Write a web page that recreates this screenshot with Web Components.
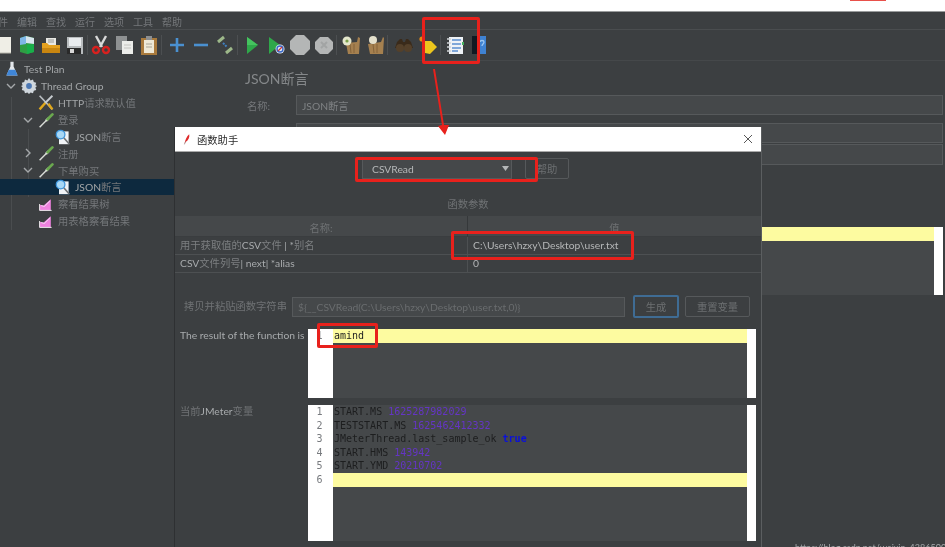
<!DOCTYPE html>
<html lang="zh">
<head>
<meta charset="utf-8">
<title>JMeter</title>
<style>
html, body { margin: 0; height: 100%; background: #3c3f41; overflow: hidden; }
body { font: 10.3px Lato, "Noto Sans CJK SC", sans-serif; color: #8b8e90; }
</style>
</head>
<body>
<jm-app></jm-app>

<script>
const icons = {
  doc: '<path d="M1 2h17v16H1z" fill="#efeee6"/><path d="M1 18h17" stroke="#b9b8ae"/>',
  templates: '<path d="M3 3l6-2 8 2v14l-7 2-7-2z" fill="#2f9e44"/><path d="M3 3l6-2v8l-6 1z" fill="#7fb7e8"/><path d="M9 1l8 2v6l-8-1z" fill="#d8e6ee"/><path d="M10 10l7-1v8l-7 2z" fill="#18b04a"/>',
  open: '<path d="M5 3h10v8H5z" fill="#e8e8e4"/><path d="M7 5h6M7 7h6" stroke="#9a9a96"/><path d="M1 8h5l2 2h11v8H1z" fill="#e5a11f"/><path d="M1 13h18v5H1z" fill="#c98610"/>',
  save: '<path d="M2 2h16v17H2z" fill="#b8bcbe"/><path d="M4 3h12v8H4z" fill="#e9ecee"/><path d="M2 13h14v6H2z" fill="#2a2a2a"/><path d="M5 14h4v4H5z" fill="#d8d8d8"/>',
  cut: '<path d="M5 1l6 11M15 1L9 12" stroke="#d9d9d9" stroke-width="2.4"/><circle cx="5" cy="15" r="3" fill="none" stroke="#d7211f" stroke-width="2.4"/><circle cx="15" cy="15" r="3" fill="none" stroke="#d7211f" stroke-width="2.4"/>',
  copy: '<path d="M1 1h11v14H1z" fill="#8e9192"/><path d="M7 6h11v13H7z" fill="#ecedea"/><path d="M9 10h7M9 13h7" stroke="#c4c4c0"/>',
  paste: '<path d="M2 3h16v17H2z" fill="#a97a3c"/><path d="M5 5h10v13H5z" fill="#efe9d6"/><path d="M7 1h6v4H7z" fill="#8d8f90"/><path d="M7 9h6M7 12h6" stroke="#a9a596"/>',
  plus: '<path d="M10 3v14M3 10h14" stroke="#4a90d0" stroke-width="2.6"/>',
  minus: '<path d="M3 10h14" stroke="#4a90d0" stroke-width="2.6"/>',
  toggle: '<path d="M3 7l6-5M11 18l6-5" stroke="#9db88a" stroke-width="3"/><path d="M8 8l4 4" stroke="#3f7fc0" stroke-width="2" stroke-dasharray="2 1"/>',
  play: '<path d="M5 2l11 8-11 9z" fill="#2fa84a"/><path d="M5 2l11 8H5z" fill="#45c45f"/>',
  playx: '<path d="M3 2l11 8-11 9z" fill="#2fa84a"/><circle cx="14" cy="14" r="4.5" fill="#e9edf5"/><circle cx="14" cy="14" r="3" fill="none" stroke="#3868c8" stroke-width="1.4"/><path d="M12 16l4-4" stroke="#c83838" stroke-width="1.2"/>',
  stop: '<path d="M6 0h8l6 6v8l-6 6H6l-6-6V6z" fill="#b4b6b6"/>',
  halt: '<path d="M6 2h8l5 5v7l-5 5H6l-5-5V7z" fill="#b4b6b6"/><path d="M7 7l6 6M13 7l-6 6" stroke="#a2a4a4" stroke-width="2"/>',
  clear: '<path d="M5 8l11-1 1-5 2 1-1 16H7z" fill="#a5804f"/><path d="M9 9l1 9M13 9v9" stroke="#84633a"/><circle cx="6" cy="6" r="4.5" fill="#e4e6cc"/><circle cx="6" cy="6" r="1.6" fill="#79a04a"/>',
  clearall: '<path d="M3 9l13-2 2-5 1 1-1 16H5z" fill="#a5804f"/><path d="M8 9l1 9M12 9v9" stroke="#84633a"/><circle cx="8" cy="5" r="4" fill="#e4e0cc"/>',
  search: '<path d="M3 7l3-3h2l1 3h2l1-3h2l3 3 2 6H1z" fill="#3a2a1a"/><circle cx="6" cy="13" r="4" fill="#54402a"/><circle cx="14" cy="13" r="4" fill="#54402a"/>',
  reset: '<circle cx="4" cy="4" r="2.6" fill="#e58a12"/><path d="M7 6h6l6 6-7 7-5-1z" fill="#ecc61d"/>',
  func: '<path d="M4 2h14v17H4z" fill="#eef2f6"/><path d="M7 5h9M7 9h9M7 13h9M7 16h6" stroke="#5b8ed0" stroke-width="1.4"/><path d="M2 4h4M2 8h4M2 12h4M2 16h4" stroke="#cfd3d6" stroke-width="1.6"/><path d="M18 7v3" stroke="#45b060" stroke-width="2"/>',
  help: '<path d="M3 1h14v18H3z" fill="#3f82d2"/><path d="M3 1h5v18H3z" fill="#111922"/><path d="M11 7c0-2 4-2 4 0 0 2-2 2-2 4" fill="none" stroke="#9cc6f0" stroke-width="1.3"/>',
  flask: '<path d="M8 1h4v6l5 11H3L8 7z" fill="#e4e8ec"/><path d="M6 11h8l3 7H3z" fill="#3f86d8"/>',
  gear: '<path d="M10 0l2 3 3-1 1 3 3 1-1 3 2 1-2 2 1 3-3 1-1 3-3-1-2 2-2-2-3 1-1-3-3-1 1-3-2-2 2-1-1-3 3-1 1-3 3 1z" fill="#cfd6dc"/><circle cx="10" cy="10" r="3.6" fill="#4c78b4"/>',
  tools: '<path d="M2 1l16 17" stroke="#b9bec2" stroke-width="2"/><path d="M18 1L8 11" stroke="#c7ccd0" stroke-width="2.4"/><path d="M9 10l-7 8" stroke="#e0a81c" stroke-width="3"/><path d="M13 11l5 7" stroke="#e0a81c" stroke-width="3"/>',
  dropper: '<path d="M2 19L11 10" stroke="#d9dcd8" stroke-width="1.8"/><path d="M10 11l3-3" stroke="#e8eae6" stroke-width="3"/><path d="M12 9l6-6" stroke="#6aa84f" stroke-width="3.4" stroke-linecap="round"/>',
  lens: '<path d="M5 3h12v16H5z" fill="#f0f3f6"/><path d="M11 11l7 8" stroke="#6d7174" stroke-width="2"/><circle cx="7" cy="7" r="5.4" fill="#a8d8f6" stroke="#3f96dc" stroke-width="1.6"/>',
  graph: '<path d="M2 18V11l5 1 9-8v14z" fill="#ef82e0"/><path d="M2 18h15M2 10v8" stroke="#eee" stroke-width="1.2"/><path d="M4 12l4 1 7-7" stroke="#f4f0f8" fill="none"/>',
  quill: '<path d="M4 19C5 12 8 5 12 2c1 5-1 10-6 13z" fill="#e02a2a"/><path d="M4 19l2-5" stroke="#888"/>'
};

// small helper, every element is only a template plus a shadow root
function shadow(el, html) {
  el.attachShadow({ mode: 'open' }).innerHTML = html;
}

class JmIcon extends HTMLElement {
  connectedCallback() {
    const size = this.getAttribute('size') || 20;
    shadow(this, `
      <style>:host { display: inline-flex; flex: none; } svg { display: block; }</style>
      <svg width="${size}" height="${size}" viewBox="0 0 20 20">${icons[this.getAttribute('name')]}</svg>`);
  }
}

class JmMenubar extends HTMLElement {
  constructor() {
    super();
    shadow(this, `
      <style>
        :host { display: flex; gap: 9px; height: 18px; align-items: center; padding-top: 1px; box-sizing: border-box;
                margin-left: -2px; border-bottom: 1px solid #4a4d4f; color: #74777a; font-size: 10px; }
      </style>
      <slot></slot>`);
  }
}

class JmToolbar extends HTMLElement {
  constructor() {
    super();
    const slot = n => `<div class="slot"><jm-icon name="${n}"></jm-icon></div>`;
    const sep = w => `<div class="sep" style="width:${w}px"></div>`;
    shadow(this, `
      <style>
        :host { display: flex; height: 30px; align-items: center; margin-left: -9px; border-bottom: 1px solid #45484a; }
        .slot { width: 24px; display: flex; justify-content: center; flex: none; }
        .sep { height: 20px; flex: none; }
        .sep::after { content: ""; display: block; width: 1px; height: 20px; background: #4c4f51; }
      </style>
      ${['doc', 'templates', 'open', 'save'].map(slot).join('')}${sep(2)}
      ${['cut', 'copy', 'paste'].map(slot).join('')}${sep(4)}
      ${['plus', 'minus', 'toggle'].map(slot).join('')}${sep(3)}
      ${['play', 'playx', 'stop', 'halt'].map(slot).join('')}${sep(3)}
      ${['clear', 'clearall'].map(slot).join('')}${sep(5)}
      ${['search', 'reset'].map(slot).join('')}${sep(3)}
      ${['func', 'help'].map(slot).join('')}`);
  }
}

class JmTreeRow extends HTMLElement {
  connectedCallback() {
    const level = +this.getAttribute('level') || 0;
    const chev = this.getAttribute('chev');
    const path = chev === 'open' ? 'M1 3l4 4 4-4' : 'M3 1l4 4-4 4';
    shadow(this, `
      <style>
        :host { display: flex; height: 16.8px; align-items: center; color: #a3a6a8; white-space: nowrap; }
        :host([selected]) { background: #0d293e; }
        .indent { width: ${17 * level + 4}px; flex: none; display: flex; justify-content: flex-end; padding-right: 4px; box-sizing: border-box; }
        .indent svg { width: 12px; height: 10px; }
        jm-icon { margin-right: 4px; }
      </style>
      <div class="indent">${chev ? `<svg viewBox="0 0 10 10"><path d="${path}" fill="none" stroke="#a5a8aa" stroke-width="1.4"/></svg>` : ''}</div>
      <jm-icon name="${this.getAttribute('icon')}" size="16"></jm-icon>
      <slot></slot>`);
  }
}

class JmField extends HTMLElement {
  constructor() {
    super();
    shadow(this, `
      <style>
        :host { display: flex; align-items: center; box-sizing: border-box; height: 20px; border: 1px solid #56595b;
                background: #45484a; padding: 0 5px; color: #7f8284; white-space: nowrap; overflow: hidden; }
      </style>
      <slot></slot>`);
  }
}

class JmButton extends HTMLElement {
  constructor() {
    super();
    shadow(this, `
      <style>
        :host { display: flex; align-items: center; justify-content: center; box-sizing: border-box; flex: none;
                border: 1px solid #56595b; border-radius: 2px; color: #6d7072; }
        :host([primary]) { border: 2px solid #3f6c94; }
      </style>
      <slot></slot>`);
  }
}

class JmEditor extends HTMLElement {
  connectedCallback() {
    const lines = +this.getAttribute('lines') || 1;
    const active = +this.getAttribute('active') || 1;
    const nums = Array.from({ length: lines }, (_, i) => `<div>${i + 1}</div>`).join('');
    shadow(this, `
      <style>
        :host { display: grid; grid-template-columns: 25px 1fr 9px; background: #45484a; flex: none;
                font: 10px/13.6px "DejaVu Sans Mono", monospace; color: #1d1e1f; overflow: hidden; }
        .gutter { background: #fff; text-align: center; color: #777a7e; padding-right: 2px; }
        .body { position: relative; white-space: pre; padding-left: 1px; }
        .hl { position: absolute; left: 0; right: 0; top: ${(active - 1) * 13.6}px; height: 14px; background: #fdfba0; }
        .text { position: relative; }
        .strip { background: #fff; }
      </style>
      <div class="gutter">${nums}</div>
      <div class="body"><div class="hl"></div><div class="text"><slot></slot></div></div>
      <div class="strip"></div>`);
  }
}

class JmTable extends HTMLElement {
  constructor() {
    super();
    shadow(this, `
      <style>
        :host { display: grid; grid-template-columns: 292px 1fr; color: #8b8e90; }
        .head { height: 21px; display: flex; align-items: center; justify-content: center; background: #45484a;
                border-bottom: 1px solid #3a3d3f; box-sizing: border-box; padding-top: 3px; color: #6f7274; }
        .head + .head { border-left: 1px solid #35383a; }
        ::slotted(div) { height: 17px; line-height: 17px; padding-left: 5px; border-bottom: 1px solid #4d5052;
                         white-space: nowrap; color: #7c7f81; }
        ::slotted(div.v) { border-left: 1px solid #4d5052; color: #b5b7b8; }
      </style>
      <div class="head">名称:</div><div class="head">值</div>
      <slot></slot>`);
  }
}

class JmNote extends HTMLElement {
  constructor() {
    super();
    shadow(this, `<style>:host { position: absolute; box-sizing: border-box; border: 3px solid #e8211c; border-radius: 2px; }</style>`);
  }
}

class JmDialog extends HTMLElement {
  constructor() {
    super();
    shadow(this, `
      <style>
        :host { position: absolute; left: 174px; top: 127px; width: 588px; height: 420px; box-sizing: border-box;
                border-left: 1px solid #2e3032; border-right: 1px solid #5b5e60; background: #3c3f41;
                display: flex; flex-direction: column; overflow: hidden; }
        .title { height: 25px; background: #fff; border-bottom: 1px solid #aaa; box-sizing: border-box; flex: none;
                 display: flex; align-items: center; gap: 3px; padding-left: 7px; color: #2b2b2b; }
        .close { margin-left: auto; margin-right: 8px; width: 10px; height: 10px; }
        .body { display: flex; flex-direction: column; flex: 1; }
      </style>
      <div class="title">
        <jm-icon name="quill" size="12"></jm-icon>
        <slot name="title"></slot>
        <svg class="close" viewBox="0 0 10 10"><path d="M1 1l8 8M9 1l-8 8" stroke="#444" stroke-width=".9"/></svg>
      </div>
      <div class="body"><slot></slot></div>`);
  }
}

class JmApp extends HTMLElement {
  constructor() {
    super();
    shadow(this, `
      <style>
        :host { display: block; position: relative; width: 945px; height: 547px; overflow: hidden; background: #3c3f41;
                font: 10.3px Lato, "Noto Sans CJK SC", sans-serif; filter: blur(.35px); }
        .strip { height: 11px; background: #fff; border-bottom: 1px solid #9a9c9d; position: relative; }
        .strip i { position: absolute; left: 850px; top: 0; width: 36px; height: 1px; background: #e8504a; }
        .main { display: grid; grid-template-columns: 174px 1fr; height: 486px; }
        .tree { background:
                  linear-gradient(#4a4d4f, #4a4d4f) 11px 36px / 1px 133px no-repeat,
                  linear-gradient(#4a4d4f, #4a4d4f) 28px 68px / 1px 68px no-repeat; }
        .d { color: #74777a; }
        .panel { padding: 8px 2px 0 71px; display: flex; flex-direction: column; }
        .h { font-size: 14px; line-height: 20px; color: #85888a; }
        .row { display: flex; align-items: center; margin-top: 6px; padding-left: 2px; color: #74777a; }
        .row span { width: 49px; }
        .row jm-field { flex: 1; }
        .f2 { margin: 8px 0 0 51px; height: 20px; }
        .f3 { margin: 1px 0 0 51px; height: 21px; }
        .bg-ed { margin: 62px 0 0 51px; height: 68px; }

        .tb { display: flex; padding-left: 187px; padding-top: 6px; gap: 13px; align-items: stretch; }
        .combo { width: 150px; height: 21px; box-sizing: border-box; border: 1px solid #56595b; background: #45484a;
                 display: flex; align-items: center; padding: 0 1px 0 9px; color: #b5b7b8; }
        .combo svg { margin-left: auto; }
        .cap { text-align: center; margin-top: 18px; height: 14px; line-height: 14px; color: #6f7274; }
        jm-table { margin-top: 5px; }
        .copy { display: flex; margin-top: 22px; align-items: center; padding-left: 9px; }
        .copy .lb { width: 108px; flex: none; color: #6f7274; margin-top: -2px; }
        .copy jm-field { width: 333px; flex: none; color: #6a6d6f; margin-right: 8px; }
        .res { display: flex; margin: 11px 0 0 0; }
        .res .lb { width: 128px; flex: none; padding: 0 0 0 5px; height: 14px; line-height: 13px; color: #a8abad; white-space: nowrap; }
        .vars { margin-top: 7px; }
        .vars .lb { color: #6f7274; }
        .vars .lb b { color: #a8abad; font-weight: 400; }
        .bright { color: #a8abad; }
        .num { color: #6435c4; }
        .kw { color: #0a10dc; font-weight: 700; }
        .wm { position: absolute; left: 795px; top: 542px; font-size: 9px; color: #a5a8aa; white-space: nowrap; }
        .arrow { position: absolute; left: 0; top: 0; pointer-events: none; }
      </style>
      <div class="strip"><i></i></div>
      <jm-menubar>
        <span>件</span><span>编辑</span><span>查找</span><span>运行</span><span>选项</span><span>工具</span><span>帮助</span>
      </jm-menubar>
      <jm-toolbar></jm-toolbar>
      <div class="main">
        <div class="tree">
          <jm-tree-row icon="flask">Test Plan</jm-tree-row>
          <jm-tree-row level="1" chev="open" icon="gear">Thread Group</jm-tree-row>
          <jm-tree-row level="2" icon="tools">HTTP<span class="d">请求默认值</span></jm-tree-row>
          <jm-tree-row level="2" chev="open" icon="dropper"><span class="d">登录</span></jm-tree-row>
          <jm-tree-row level="3" icon="lens">JSON<span class="d">断言</span></jm-tree-row>
          <jm-tree-row level="2" chev="closed" icon="dropper"><span class="d">注册</span></jm-tree-row>
          <jm-tree-row level="2" chev="open" icon="dropper"><span class="d">下单购买</span></jm-tree-row>
          <jm-tree-row level="3" icon="lens" selected>JSON<span class="d">断言</span></jm-tree-row>
          <jm-tree-row level="2" icon="graph"><span class="d">察看结果树</span></jm-tree-row>
          <jm-tree-row level="2" icon="graph"><span class="d">用表格察看结果</span></jm-tree-row>
        </div>
        <div class="panel">
          <div class="h">JSON断言</div>
          <div class="row"><span>名称:</span><jm-field>JSON断言</jm-field></div>
          <jm-field class="f2"></jm-field>
          <jm-field class="f3"></jm-field>
          <jm-editor class="bg-ed" lines="1"></jm-editor>
        </div>
      </div>

      <jm-dialog>
        <span slot="title">函数助手</span>
        <div class="tb">
          <div class="combo">CSVRead
            <svg width="9" height="5" viewBox="0 0 9 5"><path d="M1 0h7L4.500 5z" fill="#b5b7b8"/></svg>
          </div>
          <jm-button style="width:44px">帮助</jm-button>
        </div>
        <div class="cap">函数参数</div>
        <jm-table>
          <div>用于获取值的<span class="bright">CSV</span>文件 <span class="bright">| *</span>别名</div>
          <div class="v">C:\\Users\\hzxy\\Desktop\\user.txt</div>
          <div><span class="bright">CSV</span>文件列号<span class="bright">| next| *alias</span></div>
          <div class="v">0</div>
        </jm-table>
        <div class="copy">
          <span class="lb">拷贝并粘贴函数字符串</span>
          <jm-field style="height:20px">\${__CSVRead(C:\\Users\\hzxy\\Desktop\\user.txt,0)}</jm-field>
          <jm-button primary style="width:46px;height:23px;margin-right:6px">生成</jm-button>
          <jm-button style="width:65px;height:21px">重置变量</jm-button>
        </div>
        <div class="res">
          <div class="lb">The result of the function is</div>
          <jm-editor lines="1" style="width:448px;height:69px">amind</jm-editor>
        </div>
        <div class="res vars">
          <div class="lb">当前<b>JMeter</b>变量</div>
          <jm-editor lines="6" active="6" style="width:448px;height:136px">START.MS <span class="num">1625287982029</span>
TESTSTART.MS <span class="num">1625462412332</span>
JMeterThread.last_sample_ok <span class="kw">true</span>
START.HMS <span class="num">143942</span>
START.YMD <span class="num">20210702</span></jm-editor>
        </div>
      </jm-dialog>

      <jm-note style="left:422px;top:17px;width:58px;height:47px"></jm-note>
      <jm-note style="left:355px;top:157px;width:183px;height:25px"></jm-note>
      <jm-note style="left:451px;top:231px;width:183px;height:29px"></jm-note>
      <jm-note style="left:317px;top:323px;width:61px;height:25px"></jm-note>
      <svg class="arrow" width="945" height="547"><path d="M433 69l2 0 9 56 5 0-4 10-7-9 4-1z" fill="#e8211c"/></svg>
      <div class="wm">https://blog.csdn.net/weixin_43865008</div>`);
  }
}

customElements.define('jm-icon', JmIcon);
customElements.define('jm-menubar', JmMenubar);
customElements.define('jm-toolbar', JmToolbar);
customElements.define('jm-tree-row', JmTreeRow);
customElements.define('jm-field', JmField);
customElements.define('jm-button', JmButton);
customElements.define('jm-editor', JmEditor);
customElements.define('jm-table', JmTable);
customElements.define('jm-note', JmNote);
customElements.define('jm-dialog', JmDialog);
customElements.define('jm-app', JmApp);
</script>
</body>
</html>
